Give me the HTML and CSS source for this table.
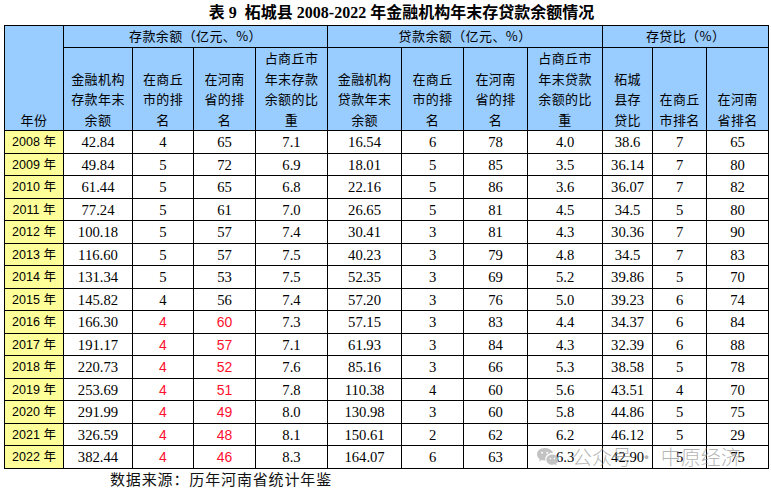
FILE: index.html
```html
<!DOCTYPE html>
<html lang="zh-CN">
<head>
<meta charset="utf-8">
<title>表 9 柘城县 2008-2022 年金融机构年末存贷款余额情况</title>
<link rel="stylesheet" href="styles.css">
</head>
<body>
<div class="page">
  <h1 class="title">表 9&nbsp; 柘城县 2008-2022 年金融机构年末存贷款余额情况</h1>
  <table class="grid">
    <colgroup>
      <col class="c1"><col class="c2"><col class="c3"><col class="c4"><col class="c5"><col class="c6">
      <col class="c7"><col class="c8"><col class="c9"><col class="c10"><col class="c11"><col class="c12">
    </colgroup>
    <thead>
      <tr class="h1">
        <th rowspan="2" class="hb">年份</th>
        <th colspan="4">存款余额（亿元、%）</th>
        <th colspan="4">贷款余额（亿元、%）</th>
        <th colspan="3">存贷比（%）</th>
      </tr>
      <tr class="h2">
        <th class="hb">金融机构<br>存款年末<br>余额</th>
        <th class="hb">在商丘<br>市的排<br>名</th>
        <th class="hb">在河南<br>省的排<br>名</th>
        <th class="hb">占商丘市<br>年末存款<br>余额的比<br>重</th>
        <th class="hb">金融机构<br>贷款年末<br>余额</th>
        <th class="hb">在商丘<br>市的排<br>名</th>
        <th class="hb">在河南<br>省的排<br>名</th>
        <th class="hb">占商丘市<br>年末贷款<br>余额的比<br>重</th>
        <th class="hb">柘城<br>县存<br>贷比</th>
        <th class="hb">在商丘<br>市排名</th>
        <th class="hb">在河南<br>省排名</th>
      </tr>
    </thead>
    <tbody>
      <tr><td class="yr">2008 年</td><td>42.84</td><td>4</td><td>65</td><td>7.1</td><td>16.54</td><td>6</td><td>78</td><td>4.0</td><td>38.6</td><td>7</td><td>65</td></tr>
      <tr><td class="yr">2009 年</td><td>49.84</td><td>5</td><td>72</td><td>6.9</td><td>18.01</td><td>5</td><td>85</td><td>3.5</td><td>36.14</td><td>7</td><td>80</td></tr>
      <tr><td class="yr">2010 年</td><td>61.44</td><td>5</td><td>65</td><td>6.8</td><td>22.16</td><td>5</td><td>86</td><td>3.6</td><td>36.07</td><td>7</td><td>82</td></tr>
      <tr><td class="yr">2011 年</td><td>77.24</td><td>5</td><td>61</td><td>7.0</td><td>26.65</td><td>5</td><td>81</td><td>4.5</td><td>34.5</td><td>5</td><td>80</td></tr>
      <tr><td class="yr">2012 年</td><td>100.18</td><td>5</td><td>57</td><td>7.4</td><td>30.41</td><td>3</td><td>81</td><td>4.3</td><td>30.36</td><td>7</td><td>90</td></tr>
      <tr><td class="yr">2013 年</td><td>116.60</td><td>5</td><td>57</td><td>7.5</td><td>40.23</td><td>3</td><td>79</td><td>4.8</td><td>34.5</td><td>7</td><td>83</td></tr>
      <tr><td class="yr">2014 年</td><td>131.34</td><td>5</td><td>53</td><td>7.5</td><td>52.35</td><td>3</td><td>69</td><td>5.2</td><td>39.86</td><td>5</td><td>70</td></tr>
      <tr><td class="yr">2015 年</td><td>145.82</td><td>4</td><td>56</td><td>7.4</td><td>57.20</td><td>3</td><td>76</td><td>5.0</td><td>39.23</td><td>6</td><td>74</td></tr>
      <tr><td class="yr">2016 年</td><td>166.30</td><td class="red">4</td><td class="red">60</td><td>7.3</td><td>57.15</td><td>3</td><td>83</td><td>4.4</td><td>34.37</td><td>6</td><td>84</td></tr>
      <tr><td class="yr">2017 年</td><td>191.17</td><td class="red">4</td><td class="red">57</td><td>7.1</td><td>61.93</td><td>3</td><td>84</td><td>4.3</td><td>32.39</td><td>6</td><td>88</td></tr>
      <tr><td class="yr">2018 年</td><td>220.73</td><td class="red">4</td><td class="red">52</td><td>7.6</td><td>85.16</td><td>3</td><td>66</td><td>5.3</td><td>38.58</td><td>5</td><td>78</td></tr>
      <tr><td class="yr">2019 年</td><td>253.69</td><td class="red">4</td><td class="red">51</td><td>7.8</td><td>110.38</td><td>4</td><td>60</td><td>5.6</td><td>43.51</td><td>4</td><td>70</td></tr>
      <tr><td class="yr">2020 年</td><td>291.99</td><td class="red">4</td><td class="red">49</td><td>8.0</td><td>130.98</td><td>3</td><td>60</td><td>5.8</td><td>44.86</td><td>5</td><td>75</td></tr>
      <tr><td class="yr">2021 年</td><td>326.59</td><td class="red">4</td><td class="red">48</td><td>8.1</td><td>150.61</td><td>2</td><td>62</td><td>6.2</td><td>46.12</td><td>5</td><td>29</td></tr>
      <tr><td class="yr">2022 年</td><td>382.44</td><td class="red">4</td><td class="red">46</td><td>8.3</td><td>164.07</td><td>6</td><td>63</td><td>6.3</td><td>42.90</td><td>5</td><td>75</td></tr>
    </tbody>
  </table>
  <p class="source">数据来源：历年河南省统计年鉴</p>
  <div class="watermark">
    <svg class="wm-icon" viewBox="0 0 24 22" width="22" height="20" aria-hidden="true">
      <path d="M9.5 1C4.8 1 1 4.1 1 8c0 2.2 1.2 4.1 3.1 5.4L3.3 16l3-1.6c1 .3 2.1.5 3.2.5.3 0 .6 0 .9 0-.2-.6-.3-1.2-.3-1.8 0-3.7 3.5-6.6 7.9-6.6h.6C17.8 3.4 14 1 9.5 1z" fill="#b9b9b9"/>
      <circle cx="6.6" cy="6.2" r="1.1" fill="#fff"/>
      <circle cx="12.3" cy="6.2" r="1.1" fill="#fff"/>
      <path d="M18 8.3c-3.7 0-6.7 2.5-6.7 5.6s3 5.6 6.7 5.6c.8 0 1.6-.1 2.3-.4l2.4 1.3-.6-2.2c1.6-1 2.6-2.6 2.6-4.3 0-3.1-3-5.6-6.7-5.6z" fill="#b9b9b9"/>
      <circle cx="15.7" cy="12.6" r=".9" fill="#fff"/>
      <circle cx="20.2" cy="12.6" r=".9" fill="#fff"/>
    </svg>
    <span class="wm-text">公众号 · 中原经济</span>
  </div>
</div>
</body>
</html>
```

FILE: styles.css
```css
html, body {
  margin: 0;
  padding: 0;
  background: #ffffff;
}

.page {
  position: relative;
  width: 771px;
  height: 489px;
  overflow: hidden;
  color: #000;
}

.title {
  margin: 0;
  box-sizing: border-box;
  height: 25px;
  padding: 3px 0 0 32px;
  line-height: 20px;
  text-align: center;
  font-family: "Liberation Serif", "Noto Sans CJK SC", serif;
  font-weight: bold;
  font-size: 16px;
}

.grid {
  margin-left: 4px;
  width: 764px;
  table-layout: fixed;
  border-collapse: collapse;
}

.c1 { width: 59px; }
.c2 { width: 69px; }
.c3 { width: 61px; }
.c4 { width: 62px; }
.c5 { width: 72px; }
.c6 { width: 74px; }
.c7 { width: 62px; }
.c8 { width: 64px; }
.c9 { width: 75px; }
.c10 { width: 50px; }
.c11 { width: 54px; }
.c12 { width: 62px; }

.grid th,
.grid td {
  border: 1px solid #000;
  padding: 0;
  text-align: center;
}

.grid th {
  background: #99ccff;
  font-family: "Noto Sans CJK SC", sans-serif;
  font-weight: normal;
  font-size: 13px;
  letter-spacing: 0.4px;
  line-height: 20.6px;
}

.h1 th {
  height: 21px;
  vertical-align: middle;
}

.h2 th {
  height: 82px;
}

.grid th.hb {
  vertical-align: bottom;
}

.grid td {
  height: 21.5px;
  font-family: "Liberation Serif", "Noto Sans CJK SC", serif;
  font-size: 14.67px;
  line-height: 18px;
  vertical-align: middle;
}

.grid td.yr {
  background: #ffff99;
  font-family: "Liberation Sans", "Noto Sans CJK SC", sans-serif;
  font-size: 12.5px;
}

.grid td.red {
  color: #ff1030;
  font-family: "Liberation Sans", sans-serif;
  font-size: 14px;
}

.source {
  margin: 0;
  padding-left: 110px;
  height: 20px;
  line-height: 20px;
  font-family: "Noto Sans CJK SC", sans-serif;
  font-size: 15px;
  letter-spacing: 0.86px;
  color: #111;
}

.watermark {
  position: absolute;
  left: 536px;
  top: 445px;
  display: flex;
  align-items: center;
  gap: 14px;
  opacity: 0.85;
}

.wm-icon {
  display: block;
}

.wm-text {
  font-family: "Noto Sans CJK SC", sans-serif;
  font-weight: 300;
  font-size: 20px;
  line-height: 24px;
  color: rgba(140, 140, 140, 0.75);
  white-space: nowrap;
}
```
